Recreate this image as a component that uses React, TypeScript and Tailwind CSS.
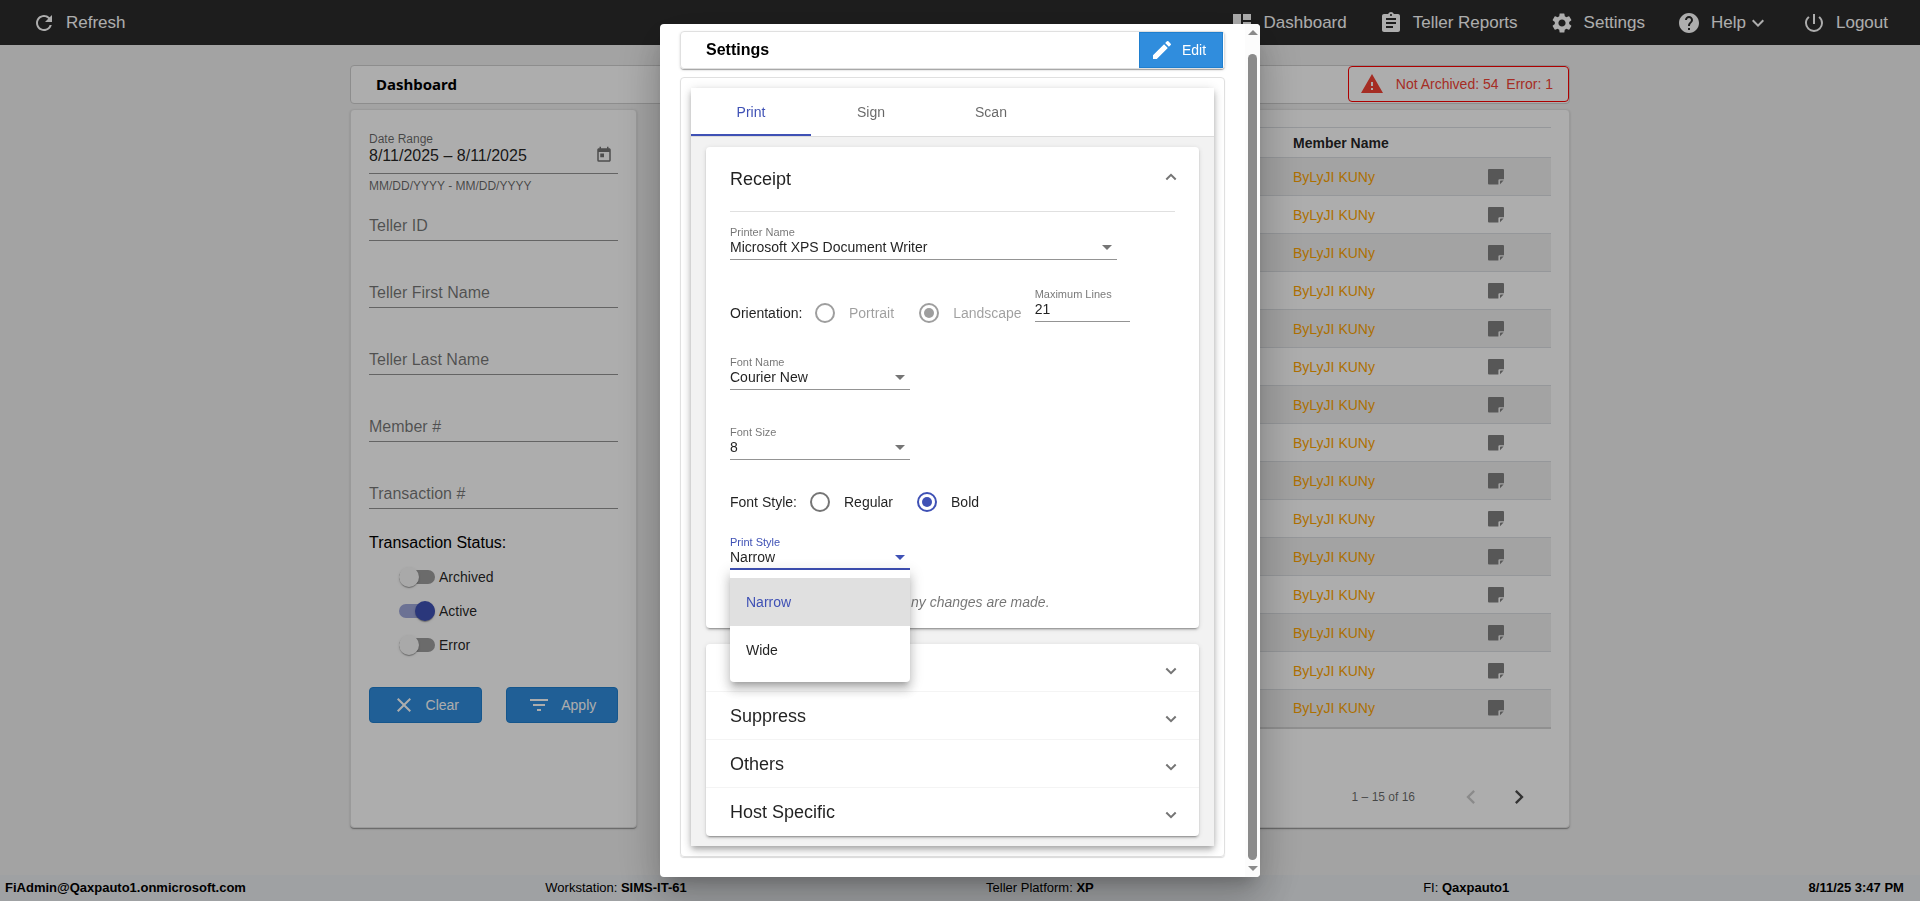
import { useState } from "react";
import type { ReactNode } from "react";
import {
  MdAssignment,
  MdChevronLeft,
  MdChevronRight,
  MdClose,
  MdDashboard,
  MdEdit,
  MdExpandMore,
  MdFilterList,
  MdHelp,
  MdPowerSettingsNew,
  MdRefresh,
  MdSettings,
  MdToday,
  MdWarning,
} from "react-icons/md";

const CARD_SHADOW =
  "shadow-[0_2px_1px_-1px_rgba(0,0,0,0.2),0_1px_1px_0_rgba(0,0,0,0.14),0_1px_3px_0_rgba(0,0,0,0.12)]";

const PANEL_SHADOW =
  "shadow-[0_3px_1px_-2px_rgba(0,0,0,0.2),0_2px_2px_0_rgba(0,0,0,0.14),0_1px_5px_0_rgba(0,0,0,0.12)]";

const FILTERS = [
  { id: "teller-id", label: "Teller ID" },
  { id: "teller-first", label: "Teller First Name" },
  { id: "teller-last", label: "Teller Last Name" },
  { id: "member", label: "Member #" },
  { id: "transaction", label: "Transaction #" },
];

const COLLAPSED_PANELS = [
  { id: "report", title: "" },
  { id: "suppress", title: "Suppress" },
  { id: "others", title: "Others" },
  { id: "host", title: "Host Specific" },
];

function NavItem({ icon, label, menu }: { icon: ReactNode; label: string; menu?: boolean }) {
  return (
    <a href="#" className="flex items-center text-[17px] leading-6 text-white">
      <span className="mr-[10px] text-2xl">{icon}</span>
      {label}
      {menu && <MdExpandMore className="text-2xl" />}
    </a>
  );
}

function FilterField({ id, label }: { id: string; label: string }) {
  const [value, setValue] = useState("");
  return (
    <div className="grid h-[41px] items-end border-b border-[#949494] pb-[2px] text-base leading-6">
      <label htmlFor={id} className={`col-start-1 row-start-1 text-black/55 ${value ? "invisible" : ""}`}>
        {label}
      </label>
      <input
        id={id}
        type="text"
        value={value}
        onChange={(e) => setValue(e.target.value)}
        className="col-start-1 row-start-1 w-full bg-transparent outline-none"
      />
    </div>
  );
}

function Toggle({ label, initial = false }: { label: string; initial?: boolean }) {
  const [on, setOn] = useState(initial);
  return (
    <label className="flex h-[34px] items-center gap-1 text-sm text-black/87">
      <span className="relative flex h-5 w-9 items-center">
        <input
          type="checkbox"
          role="switch"
          checked={on}
          onChange={(e) => setOn(e.target.checked)}
          className="peer h-[14px] w-9 appearance-none rounded-full bg-[#9e9e9e] checked:bg-[#9fa8da]"
        />
        <span className="pointer-events-none absolute left-0 top-0 size-5 rounded-full bg-[#fafafa] shadow-[0_2px_1px_-1px_rgba(0,0,0,0.2),0_1px_1px_0_rgba(0,0,0,0.14),0_1px_3px_0_rgba(0,0,0,0.12)] peer-checked:left-4 peer-checked:bg-[#3f51b5]" />
      </span>
      {label}
    </label>
  );
}

function ActionButton({ icon, label }: { icon: ReactNode; label: string }) {
  return (
    <button
      type="button"
      className="flex h-9 flex-1 items-center justify-center gap-[10px] rounded border border-[#1f7fcf] bg-[#308ddd] text-sm text-white"
    >
      <span className="text-2xl">{icon}</span>
      {label}
    </button>
  );
}

function NoteIcon() {
  return (
    <svg viewBox="0 0 16 16" className="size-4">
      <path
        fill="#808080"
        d="M1 0h14Q16 0 16 1V10.200h-4.600Q10.400 10.200 10.400 11.200v4.400H1Q0 15.600 0 14.600V1Q0 0 1 0z"
      />
      <path fill="#808080" d="M15.600 11.600L12 15.200V12.400Q12 11.600 12.800 11.600z" />
    </svg>
  );
}

function SelectField({
  id,
  label,
  options,
  width,
  focused,
}: {
  id: string;
  label: string;
  options: string[];
  width: string;
  focused?: boolean;
}) {
  return (
    <div className={width}>
      <label
        htmlFor={id}
        className={`block text-[11px] leading-3 ${focused ? "text-[#3f51b5]" : "text-black/55"}`}
      >
        {label}
      </label>
      <div
        className={`flex h-[22px] items-start ${focused ? "border-b-2 border-[#3f51b5]" : "border-b border-[#949494]"}`}
      >
        <select
          id={id}
          className="w-full appearance-none bg-transparent text-sm leading-[18px] text-black/87 outline-none"
        >
          {options.map((o) => (
            <option key={o}>{o}</option>
          ))}
        </select>
        <svg
          viewBox="0 0 10 5"
          className={`mr-[5px] mt-[7px] h-[5px] w-[10px] shrink-0 ${focused ? "fill-[#3f51b5]" : "fill-[#757575]"}`}
        >
          <path d="M0 0h10L5 5z" />
        </svg>
      </div>
    </div>
  );
}

function Radio({
  name,
  label,
  checked,
  disabled,
}: {
  name: string;
  label: string;
  checked?: boolean;
  disabled?: boolean;
}) {
  return (
    <label className={`flex items-center gap-[14px] ${disabled ? "text-black/38" : "text-black/87"}`}>
      <input
        type="radio"
        name={name}
        defaultChecked={checked}
        disabled={disabled}
        className="grid size-5 appearance-none place-items-center rounded-full border-2 border-[#757575] before:size-[10px] before:rounded-full checked:border-[#3f51b5] checked:before:bg-[#3f51b5] disabled:border-[#9e9e9e] disabled:checked:before:bg-[#9e9e9e]"
      />
      {label}
    </label>
  );
}

function Chevron({ up }: { up?: boolean }) {
  return (
    <svg viewBox="0 0 12 8" className="h-2 w-3 fill-none stroke-[#757575] stroke-2">
      <path d={up ? "M1.300 6.500L6 1.800l4.700 4.700" : "M1.300 1.500L6 6.200l4.700-4.700"} />
    </svg>
  );
}

function SettingsDialog() {
  return (
    <div className="fixed inset-0 flex justify-center bg-black/32 py-6">
      <section
        role="dialog"
        aria-label="Settings"
        className="flex w-[600px] overflow-hidden rounded bg-white shadow-[0_11px_15px_-7px_rgba(0,0,0,0.2),0_24px_38px_3px_rgba(0,0,0,0.14),0_9px_46px_8px_rgba(0,0,0,0.12)]"
      >
        <div className="flex flex-1 flex-col px-5 pb-5 pt-[7px]">
          <div
            className={`flex h-[38px] shrink-0 items-center justify-between rounded border border-[#e0e0e0] pl-[25px] pr-px ${CARD_SHADOW}`}
          >
            <h2 className="text-base font-bold text-black">Settings</h2>
            <button
              type="button"
              className="flex h-9 w-[84px] items-center gap-2 border border-[#1f7fcf] bg-[#308ddd] pl-[10px] text-sm text-white"
            >
              <MdEdit className="text-2xl" />
              Edit
            </button>
          </div>

          <div className="mt-2 flex-1 rounded border border-[#e0e0e0] p-[10px] shadow-[0_1px_1px_rgba(0,0,0,0.14)]">
            <div className="flex h-full flex-col bg-[#f2f2f2] shadow-[0_3px_5px_-1px_rgba(0,0,0,0.2),0_5px_8px_0_rgba(0,0,0,0.14),0_1px_10px_0_rgba(0,0,0,0.12)]">
              <div role="tablist" className="flex h-[49px] shrink-0 border-b border-[#dcdcdc] bg-white text-sm">
                <button
                  type="button"
                  role="tab"
                  aria-selected="true"
                  className="w-[120px] border-b-2 border-[#3f51b5] pt-[2px] text-[#3f51b5]"
                >
                  Print
                </button>
                <button type="button" role="tab" aria-selected="false" className="w-[120px] text-black/60">
                  Sign
                </button>
                <button type="button" role="tab" aria-selected="false" className="w-[120px] text-black/60">
                  Scan
                </button>
              </div>

              <div className="px-[15px] py-[10px]">
                <div className={`h-[481px] rounded bg-white px-6 text-sm text-black/87 ${PANEL_SHADOW}`}>
                  <button
                    type="button"
                    aria-expanded="true"
                    className="flex h-[65px] w-full items-center justify-between border-b border-[#e0e0e0] text-lg"
                  >
                    Receipt
                    <span className="-mr-[2px] pb-1">
                      <Chevron up />
                    </span>
                  </button>

                  <div className="pt-[14px]">
                    <SelectField
                      id="printer"
                      label="Printer Name"
                      options={["Microsoft XPS Document Writer"]}
                      width="w-[387px]"
                    />
                  </div>

                  <div className="flex items-start pt-7">
                    <div className="flex items-center pt-[15px]">
                      <span className="w-[85px]">Orientation:</span>
                      <Radio name="orientation" label="Portrait" disabled />
                      <span className="w-[25px]" />
                      <Radio name="orientation" label="Landscape" checked disabled />
                    </div>
                    <div className="ml-[13px] w-[95px]">
                      <label htmlFor="lines" className="block text-[11px] leading-3 text-black/55">
                        Maximum Lines
                      </label>
                      <input
                        id="lines"
                        type="text"
                        defaultValue="21"
                        className="block h-[22px] w-full border-b border-[#949494] bg-transparent pb-1 text-sm outline-none"
                      />
                    </div>
                  </div>

                  <div className="pt-[33px]">
                    <SelectField
                      id="font-name"
                      label="Font Name"
                      options={["Courier New"]}
                      width="w-[180px]"
                    />
                  </div>
                  <div className="pt-9">
                    <SelectField id="font-size" label="Font Size" options={["8"]} width="w-[180px]" />
                  </div>

                  <div className="flex items-center pt-8">
                    <span className="w-20">Font Style:</span>
                    <Radio name="font-style" label="Regular" />
                    <span className="w-6" />
                    <Radio name="font-style" label="Bold" checked />
                  </div>

                  <div className="relative pt-6">
                    <SelectField
                      id="print-style"
                      label="Print Style"
                      options={["Narrow", "Wide"]}
                      width="w-[180px]"
                      focused
                    />
                    <ul
                      role="listbox"
                      aria-label="Print Style"
                      className="absolute left-0 top-full z-10 w-[180px] rounded-b bg-white py-2 shadow-[0_5px_5px_-3px_rgba(0,0,0,0.2),0_8px_10px_1px_rgba(0,0,0,0.14),0_3px_14px_2px_rgba(0,0,0,0.12)]"
                    >
                      <li
                        role="option"
                        aria-selected="true"
                        className="flex h-12 items-center bg-[#e0e0e0] px-4 text-[#3f51b5]"
                      >
                        Narrow
                      </li>
                      <li role="option" aria-selected="false" className="flex h-12 items-center px-4">
                        Wide
                      </li>
                    </ul>
                  </div>

                  <p className="ml-[181px] pt-[22px] italic text-black/55">ny changes are made.</p>
                </div>

                <div className={`mt-4 divide-y divide-[#f4f4f4] rounded bg-white ${PANEL_SHADOW}`}>
                  {COLLAPSED_PANELS.map(({ id, title }) => (
                    <button
                      key={id}
                      type="button"
                      aria-expanded="false"
                      className="flex h-12 w-full items-center justify-between px-6 text-lg text-black/87"
                    >
                      <span>{title}</span>
                      <span className="-mr-[2px] pt-[6px]">
                        <Chevron />
                      </span>
                    </button>
                  ))}
                </div>
              </div>
            </div>
          </div>
        </div>

        <div aria-hidden="true" className="flex w-[15px] flex-col items-center bg-[#fcfcfc] py-[6px]">
          <svg viewBox="0 0 10 5" className="h-[5px] w-[10px] shrink-0 fill-[#8b8b8b]">
            <path d="M0 5h10L5 0z" />
          </svg>
          <div className="mb-[6px] mt-[19px] w-[9px] flex-1 rounded-full bg-[#8b8b8b]" />
          <svg viewBox="0 0 10 5" className="h-[5px] w-[10px] shrink-0 fill-[#8b8b8b]">
            <path d="M0 0h10L5 5z" />
          </svg>
        </div>
      </section>
    </div>
  );
}

export default function App() {
  return (
    <div className="flex min-h-screen flex-col bg-[#f1f1f1] font-['Liberation_Sans',Arial,sans-serif]">
      <header className="flex h-[45px] items-center justify-between bg-[#2c2c2c] px-8">
        <NavItem icon={<MdRefresh />} label="Refresh" />
        <nav className="flex items-center gap-8">
          <NavItem icon={<MdDashboard />} label="Dashboard" />
          <NavItem icon={<MdAssignment />} label="Teller Reports" />
          <NavItem icon={<MdSettings />} label="Settings" />
          <NavItem icon={<MdHelp />} label="Help" menu />
          <NavItem icon={<MdPowerSettingsNew />} label="Logout" />
        </nav>
      </header>

      <main className="mx-auto flex w-full max-w-[1220px] flex-1 flex-col pb-[47px] pt-5">
        <div className="flex h-[39px] items-start justify-between rounded border border-[#d0d0d0] bg-white pl-[25px]">
          <h1 className="self-center font-['Noto_Sans','Open_Sans',sans-serif] text-[15px] font-bold">
            Dashboard
          </h1>
          <div className="flex h-9 items-center gap-3 rounded border border-[#ff0000] pl-[11px] pr-[15px] text-sm text-[#f44336]">
            <MdWarning className="text-2xl" />
            <span className="whitespace-pre">Not Archived: 54{"  "}Error: 1</span>
          </div>
        </div>

        <div className="mt-[5px] flex flex-1 gap-7">
          <form
            className={`w-[287px] shrink-0 rounded border border-[#e4e4e4] bg-white px-[18px] pt-[22px] ${CARD_SHADOW}`}
          >
            <div className="flex h-[42px] items-start justify-between border-b border-[#949494]">
              <div>
                <label htmlFor="range" className="block text-xs leading-[14px] text-black/60">
                  Date Range
                </label>
                <input
                  id="range"
                  type="text"
                  defaultValue="8/11/2025 – 8/11/2025"
                  className="block w-[180px] bg-transparent text-base leading-5 text-black/87 outline-none"
                />
              </div>
              <button type="button" aria-label="Open calendar" className="mr-[5px] mt-[14px] text-lg text-black/55">
                <MdToday />
              </button>
            </div>
            <p className="pt-[2px] text-xs leading-5 text-black/60">MM/DD/YYYY - MM/DD/YYYY</p>

            <div className="mt-1 flex flex-col gap-[26px]">
              {FILTERS.map(({ id, label }) => (
                <FilterField key={id} id={id} label={label} />
              ))}
            </div>

            <fieldset className="mt-6">
              <legend className="text-base leading-5 text-black">Transaction Status:</legend>
              <div className="pl-[30px] pt-[7px]">
                <Toggle label="Archived" />
                <Toggle label="Active" initial />
                <Toggle label="Error" />
              </div>
            </fieldset>

            <div className="mt-[25px] flex gap-6">
              <ActionButton icon={<MdClose />} label="Clear" />
              <ActionButton icon={<MdFilterList />} label="Apply" />
            </div>
          </form>

          <section
            className={`flex flex-1 flex-col rounded border border-[#e4e4e4] bg-white px-[18px] pt-[17px] ${CARD_SHADOW}`}
          >
            <table className="w-full border-collapse text-sm">
              <thead>
                <tr className="h-[30px] border-y border-[#dcdfe3]">
                  <th className="pl-[609px] text-left font-bold text-black/87">Member Name</th>
                  <th aria-label="Notes" className="w-[109px]" />
                </tr>
              </thead>
              <tbody>
                {Array.from({ length: 15 }, (_, i) => (
                  <tr
                    key={i}
                    className="h-[38px] border-b border-[#dcdfe3] odd:bg-[#f0f0f0] last:border-b-2 last:border-[#d4d4d4]"
                  >
                    <td className="pl-[609px]">
                      <a href="#" className="text-[#ffa500]">
                        ByLyJI KUNy
                      </a>
                    </td>
                    <td className="pl-[46px]">
                      <button type="button" aria-label="Note" className="block">
                        <NoteIcon />
                      </button>
                    </td>
                  </tr>
                ))}
              </tbody>
            </table>

            <div className="flex items-center justify-end pr-[18px] pt-[54px] text-xs text-black/60">
              <span className="mr-[42px]">1 – 15 of 16</span>
              <button type="button" aria-label="Previous page" disabled className="mr-5 text-[28px] text-black/20">
                <MdChevronLeft />
              </button>
              <button type="button" aria-label="Next page" className="text-[28px] text-black/70">
                <MdChevronRight />
              </button>
            </div>
          </section>
        </div>
      </main>

      <footer className="flex h-[26px] items-center justify-between bg-[#eaedf0] pl-[5px] pr-4 text-[13px] text-black">
        <b>FiAdmin@Qaxpauto1.onmicrosoft.com</b>
        <span>
          Workstation: <b>SIMS-IT-61</b>
        </span>
        <span className="pr-[30px]">
          Teller Platform: <b>XP</b>
        </span>
        <span>
          FI: <b>Qaxpauto1</b>
        </span>
        <b>8/11/25 3:47 PM</b>
      </footer>

      <SettingsDialog />
    </div>
  );
}
